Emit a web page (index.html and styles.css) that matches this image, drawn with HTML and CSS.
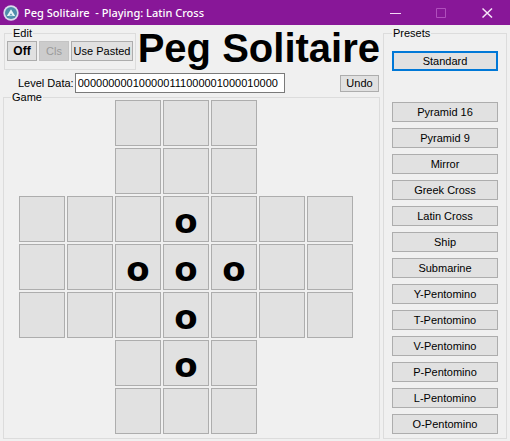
FILE: index.html
```html
<!DOCTYPE html>
<html lang="en">
<head>
  <meta charset="UTF-8">
  <title>Peg Solitaire</title>
  <link rel="stylesheet" href="styles.css">
</head>
<body>
<header class="titlebar">
  <svg class="logo" viewBox="0 0 16 16">
    <circle cx="8" cy="8" r="7.7" fill="#d9dcec"/>
    <circle cx="8" cy="8" r="6" fill="#4f8eab"/>
    <path d="M3.8 11 8 4.2 12.2 11H9.6L8 8.2 6.4 11Z" fill="#e6f4f8"/>
    <path d="M6.4 10.6h3.2" stroke="#b9dce6" stroke-width="1"/>
  </svg>
  <span class="caption">Peg Solitaire&nbsp; - Playing: Latin Cross</span>
  <button class="win" aria-label="Minimize"><svg viewBox="0 0 11 11"><path d="M0 6.5h11" stroke="#f3d9f5"/></svg></button>
  <button class="win" aria-label="Maximize" disabled><svg viewBox="0 0 11 11"><path d="M.5 1.5h9v9h-9z" fill="none" stroke="#b04fbd"/></svg></button>
  <button class="win" aria-label="Close"><svg viewBox="0 0 11 11"><path d="M.5 1.5l9.5 9M10 1.5l-9.5 9" stroke="#f6e4f8" stroke-width="1.5"/></svg></button>
</header>
<div class="window">
  <main class="left">
    <div class="top">
      <fieldset class="edit">
        <legend>Edit</legend>
        <button class="btn off">Off</button>
        <button class="btn cls" disabled>Cls</button>
        <button class="btn paste">Use Pasted</button>
      </fieldset>
      <h1>Peg Solitaire</h1>
    </div>
    <div class="level">
      <label for="levelData">Level Data:</label>
      <input type="text" id="levelData" value="000000000100000111000001000010000">
      <button class="btn undo">Undo</button>
    </div>
    <fieldset class="game">
      <legend>Game</legend>
      <div class="board" id="board"></div>
    </fieldset>
  </main>
  <fieldset class="presets">
    <legend>Presets</legend>
    <button class="btn standard">Standard</button>
    <button class="btn">Pyramid 16</button>
    <button class="btn">Pyramid 9</button>
    <button class="btn">Mirror</button>
    <button class="btn">Greek Cross</button>
    <button class="btn">Latin Cross</button>
    <button class="btn">Ship</button>
    <button class="btn">Submarine</button>
    <button class="btn">Y-Pentomino</button>
    <button class="btn">T-Pentomino</button>
    <button class="btn">V-Pentomino</button>
    <button class="btn">P-Pentomino</button>
    <button class="btn">L-Pentomino</button>
    <button class="btn">O-Pentomino</button>
  </fieldset>
</div>
<script src="script.js"></script>
</body>
</html>
```
FILE: styles.css
```css
* {
  box-sizing: border-box;
}
body {
  margin: 0;
  background: #f0f0f0;
  color: #000;
  font: 11px/13px "Liberation Sans", Arial, sans-serif;
}
button, input {
  font: inherit;
  color: inherit;
  margin: 0;
}
.titlebar {
  display: flex;
  align-items: center;
  height: 25px;
  padding-left: 3px;
  background: #881798;
  color: #fff;
}
.logo {
  width: 16px;
  height: 16px;
  margin-right: 5px;
}
.caption {
  flex: 1;
  font: 500 11px/16px "Noto Sans", sans-serif;
}
.win {
  display: flex;
  align-items: center;
  justify-content: center;
  width: 46px;
  height: 25px;
  padding: 0;
  border: 0;
  background: none;
}
.win svg {
  width: 11px;
  height: 11px;
}
.window {
  display: flex;
  gap: 3px;
  padding: 5px 3px 2px;
}
.left {
  flex: 1;
}
fieldset {
  margin: 0;
  padding: 0;
  border: 1px solid #dcdcdc;
  min-width: 0;
}
/* short line box keeps the caption from pushing the content down */
legend {
  margin-left: 7px;
  padding: 0 1px;
  line-height: 6px;
}
.btn {
  height: 20px;
  padding: 0;
  border: 1px solid #adadad;
  background: #e1e1e1;
  text-align: center;
  white-space: nowrap;
}
.top {
  display: flex;
  height: 40px;
}
.edit {
  width: 132px;
  margin-left: 1px;
  padding: 5px 2px 0;
  display: flex;
  gap: 2px;
}
.edit legend {
  margin-left: 5px;
}
.off {
  width: 30px;
  font-weight: bold;
  font-size: 12px;
}
.cls {
  width: 30px;
  background: #ccc;
  border-color: #c4c4c4;
  color: #9a9a9a;
}
.paste {
  flex: 1;
}
h1 {
  flex: 1;
  margin: 0;
  font-size: 40px;
  line-height: 36px;
  text-align: right;
  white-space: nowrap;
}
.level {
  display: flex;
  align-items: center;
  height: 24px;
  padding: 2px 1px 0 15px;
}
.level input {
  width: 210px;
  height: 20px;
  margin-left: 1px;
  padding: 0 2px;
  border: 1px solid #7a7a7a;
  background: #fff;
}
.undo {
  width: 39px;
  height: 17px;
  margin-left: auto;
}
.game {
  padding-bottom: 4px;
}
.board {
  display: grid;
  grid-template-columns: repeat(7, 46px);
  grid-auto-rows: 46px;
  gap: 2px;
  padding-left: 15px;
}
.hole {
  padding: 4px 0 0;
  border: 1px solid #adadad;
  background: #e1e1e1;
  font: bold 34px/40px "DejaVu Sans", Verdana, sans-serif;
}
.presets {
  display: flex;
  flex-direction: column;
  gap: 6px;
  width: 124px;
  padding: 15px 8px 4px;
}
.presets legend {
  margin-left: 0;
}
.standard {
  margin-bottom: 25px;
  border: 2px solid #0078d7;
}
```
FILE: script.js
```js
const level = document.getElementById("levelData").value;
const board = document.getElementById("board");
let n = 0;

// the four 2x2 corners are not part of the board
for (let row = 0; row < 7; row++) {
  for (let col = 0; col < 7; col++) {
    if ((row < 2 || row > 4) && (col < 2 || col > 4)) continue;
    const hole = document.createElement("button");
    hole.className = "hole";
    hole.style.gridRow = row + 1;
    hole.style.gridColumn = col + 1;
    hole.textContent = level[n] === "1" ? "o" : "";
    board.appendChild(hole);
    n++;
  }
}
```
